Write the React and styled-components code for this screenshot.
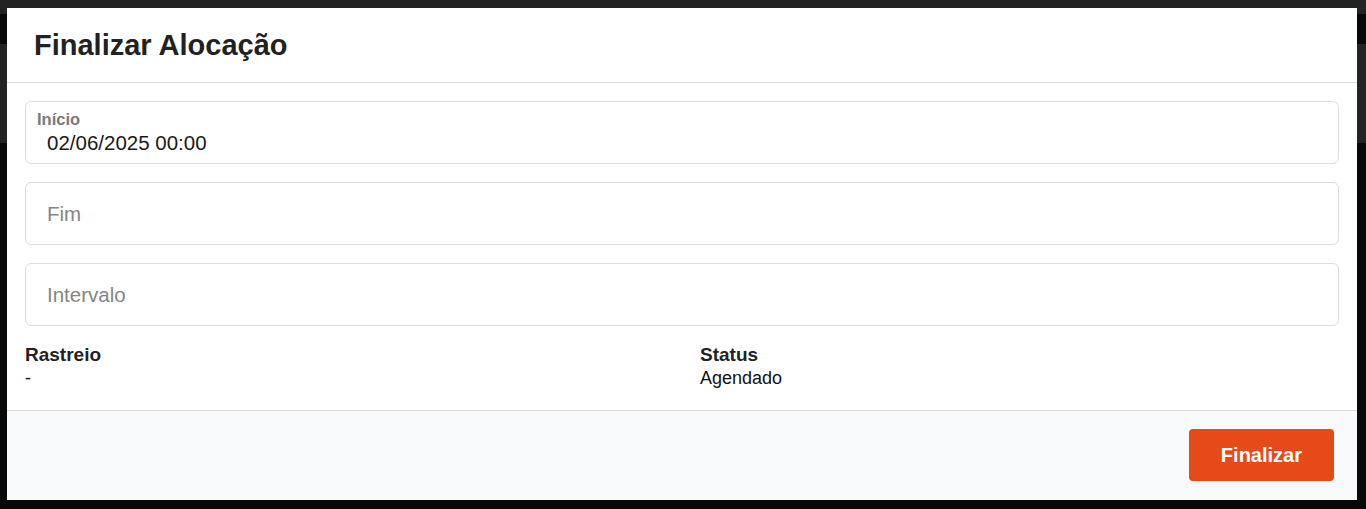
import React from "react";
import styled, { createGlobalStyle } from "styled-components";

const GlobalStyle = createGlobalStyle`
  html, body {
    margin: 0;
    padding: 0;
    background: #080808;
    font-family: "Liberation Sans", Arial, sans-serif;
  }
`;

const App = () => {
  return (
    <>
      <GlobalStyle />
      <Page>
        <Band height="14px" color="#232323" />
        <Band height="30px" color="#080808" />
        <Band height="99px" color="#232323" />
        <Band height="366px" color="#080808" />

        <Modal>
          <Header>
            <Title>Finalizar Alocação</Title>
          </Header>

          <Body>
            <Fields>
              <Field>
                <FloatLabel>Início</FloatLabel>
                <Input defaultValue="02/06/2025 00:00" />
              </Field>
              <Field>
                <Input placeholder="Fim" />
              </Field>
              <Field>
                <Input placeholder="Intervalo" />
              </Field>
            </Fields>

            <Info>
              <InfoItem>
                <InfoLabel>Rastreio</InfoLabel>
                <InfoValue>-</InfoValue>
              </InfoItem>
              <InfoItem>
                <InfoLabel>Status</InfoLabel>
                <InfoValue>Agendado</InfoValue>
              </InfoItem>
            </Info>
          </Body>

          <Footer>
            <Button>Finalizar</Button>
          </Footer>
        </Modal>
      </Page>
    </>
  );
};
export default App;


const Page = styled.div`
  position: relative;
  width: 1366px;
  height: 509px;
  overflow: hidden;
  display: flex;
  flex-direction: column;
`;

const Band = styled.div`
  height: ${props => props.height};
  background: ${props => props.color};
  flex-shrink: 0;
`;

const Modal = styled.div`
  position: absolute;
  left: 7px;
  top: 8px;
  width: 1350px;
  height: 492px;
  background: #ffffff;
  display: flex;
  flex-direction: column;
`;

const Header = styled.div`
  height: 74px;
  padding: 0 27px;
  display: flex;
  align-items: center;
  border-bottom: 1px solid #dcdcdc;
`;

const Title = styled.h1`
  margin: 0;
  font-size: 29px;
  font-weight: 700;
  color: #222222;
`;

const Body = styled.div`
  padding: 18px 18px 21px;
`;

const Fields = styled.div`
  display: flex;
  flex-direction: column;
  gap: 18px;
`;

const Field = styled.div`
  box-sizing: border-box;
  height: 63px;
  padding: 0 11px;
  border: 1px solid #dddddd;
  border-radius: 6px;
  display: flex;
  flex-direction: column;
  justify-content: center;
  gap: 4px;
`;

const FloatLabel = styled.label`
  font-size: 16.5px;
  line-height: 16px;
  font-weight: 700;
  color: #7a7a7a;
`;

const Input = styled.input`
  border: none;
  outline: none;
  padding: 0 10px;
  margin: 0;
  background: transparent;
  font-family: "Liberation Sans", Arial, sans-serif;
  font-size: 20.5px;
  line-height: 24px;
  height: 24px;
  color: #1a1a1a;

  &::placeholder {
    color: #858585;
  }
`;

const Info = styled.div`
  margin-top: 18px;
  display: grid;
  grid-template-columns: 675px 1fr;
`;

const InfoItem = styled.div`
  display: flex;
  flex-direction: column;
  gap: 2px;
`;

const InfoLabel = styled.span`
  font-size: 19px;
  line-height: 21px;
  font-weight: 700;
  color: #222222;
`;

const InfoValue = styled.span`
  font-size: 18px;
  line-height: 22px;
  color: #111111;
`;

const Footer = styled.div`
  flex: 1;
  background: #f8f9fa;
  border-top: 1px solid #dcdcdc;
  padding: 18px 23px;
  display: flex;
  justify-content: flex-end;
  align-items: flex-start;
`;

const Button = styled.button`
  height: 52px;
  padding: 0 32px;
  border: none;
  border-radius: 4px;
  background: #e64a19;
  color: #ffffff;
  font-family: "Liberation Sans", Arial, sans-serif;
  font-size: 20px;
  font-weight: 700;
  cursor: pointer;
`;
